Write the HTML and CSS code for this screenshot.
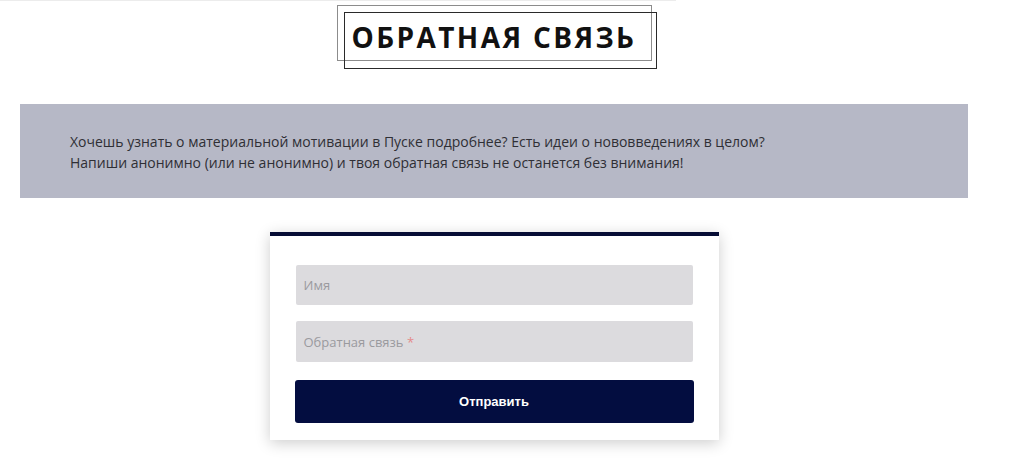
FILE: index.html
```html
<!DOCTYPE html>
<html lang="ru">
<head>
<meta charset="utf-8">
<title>Обратная связь</title>
<link rel="stylesheet" href="styles.css">
</head>
<body>
<div class="topline"></div>
<div class="page">
  <div class="title-row">
    <h1 class="title">ОБРАТНАЯ СВЯЗЬ</h1>
  </div>
  <div class="banner">
    <p>Хочешь узнать о материальной мотивации в Пуске подробнее? Есть идеи о нововведениях в целом?<br>Напиши анонимно (или не анонимно) и твоя обратная связь не останется без внимания!</p>
  </div>
  <div class="card-row">
    <form class="card">
      <div class="field"><span class="ph">Имя</span></div>
      <div class="field"><span class="ph">Обратная связь <span class="req">*</span></span></div>
      <button type="button" class="submit">Отправить</button>
    </form>
  </div>
</div>
</body>
</html>
```

FILE: styles.css
```css
html, body {
  margin: 0;
  padding: 0;
  background: #ffffff;
}
body {
  font-family: "Open Sans", "Liberation Sans", sans-serif;
  color: #333;
  width: 1024px;
  height: 466px;
  overflow: hidden;
  position: relative;
}
.topline {
  position: absolute;
  left: 0;
  top: 0;
  width: 676px;
  height: 1px;
  background: #ececec;
}
.page {
  width: 948px;
  margin-left: 20px;
  padding-top: 5px;
}
.title-row {
  display: flex;
  justify-content: center;
}
.title {
  position: relative;
  box-sizing: border-box;
  width: 315px;
  height: 56px;
  margin: 0;
  padding: 12px 0 0 0;
  border: 1.5px solid #8c8c8c;
  text-align: center;
  font-family: "Open Sans", sans-serif;
  font-weight: 700;
  font-size: 28px;
  line-height: 38px;
  letter-spacing: 2.4px;
  color: #111;
}
.title::after {
  content: "";
  position: absolute;
  box-sizing: border-box;
  left: 6.5px;
  top: 5.5px;
  width: 313px;
  height: 57px;
  border: 1px solid #2a2a2a;
  pointer-events: none;
}
.banner {
  margin-top: 43px;
  height: 94px;
  box-sizing: border-box;
  background: #b6b8c6;
  padding: 27px 0 0 50px;
}
.banner p {
  margin: 0;
  font-size: 14px;
  line-height: 21px;
  color: #2f2f35;
}
.card-row {
  display: flex;
  justify-content: center;
  margin-top: 34px;
}
.card {
  box-sizing: border-box;
  width: 449px;
  border-top: 4px solid #060d35;
  background: #fff;
  box-shadow: 0 3px 14px rgba(0, 0, 0, 0.2);
  padding: 29px 26px 17px 26px;
  display: flex;
  flex-direction: column;
}
.field {
  height: 40px;
  background: #dcdbde;
  border-radius: 2px;
  display: flex;
  align-items: center;
  padding-left: 8px;
  margin-bottom: 16px;
}
.field + .field {
  height: 41px;
  margin-bottom: 18px;
}
.ph {
  font-size: 13px;
  color: #9a9a9e;
}
.req {
  color: #e58b8b;
}
.submit {
  margin: 0 -1px;
  height: 43px;
  border: none;
  border-radius: 3px;
  background: #030d40;
  color: #fff;
  font-family: "Liberation Sans", Arial, sans-serif;
  font-weight: 700;
  font-size: 13px;
  cursor: pointer;
}
```
